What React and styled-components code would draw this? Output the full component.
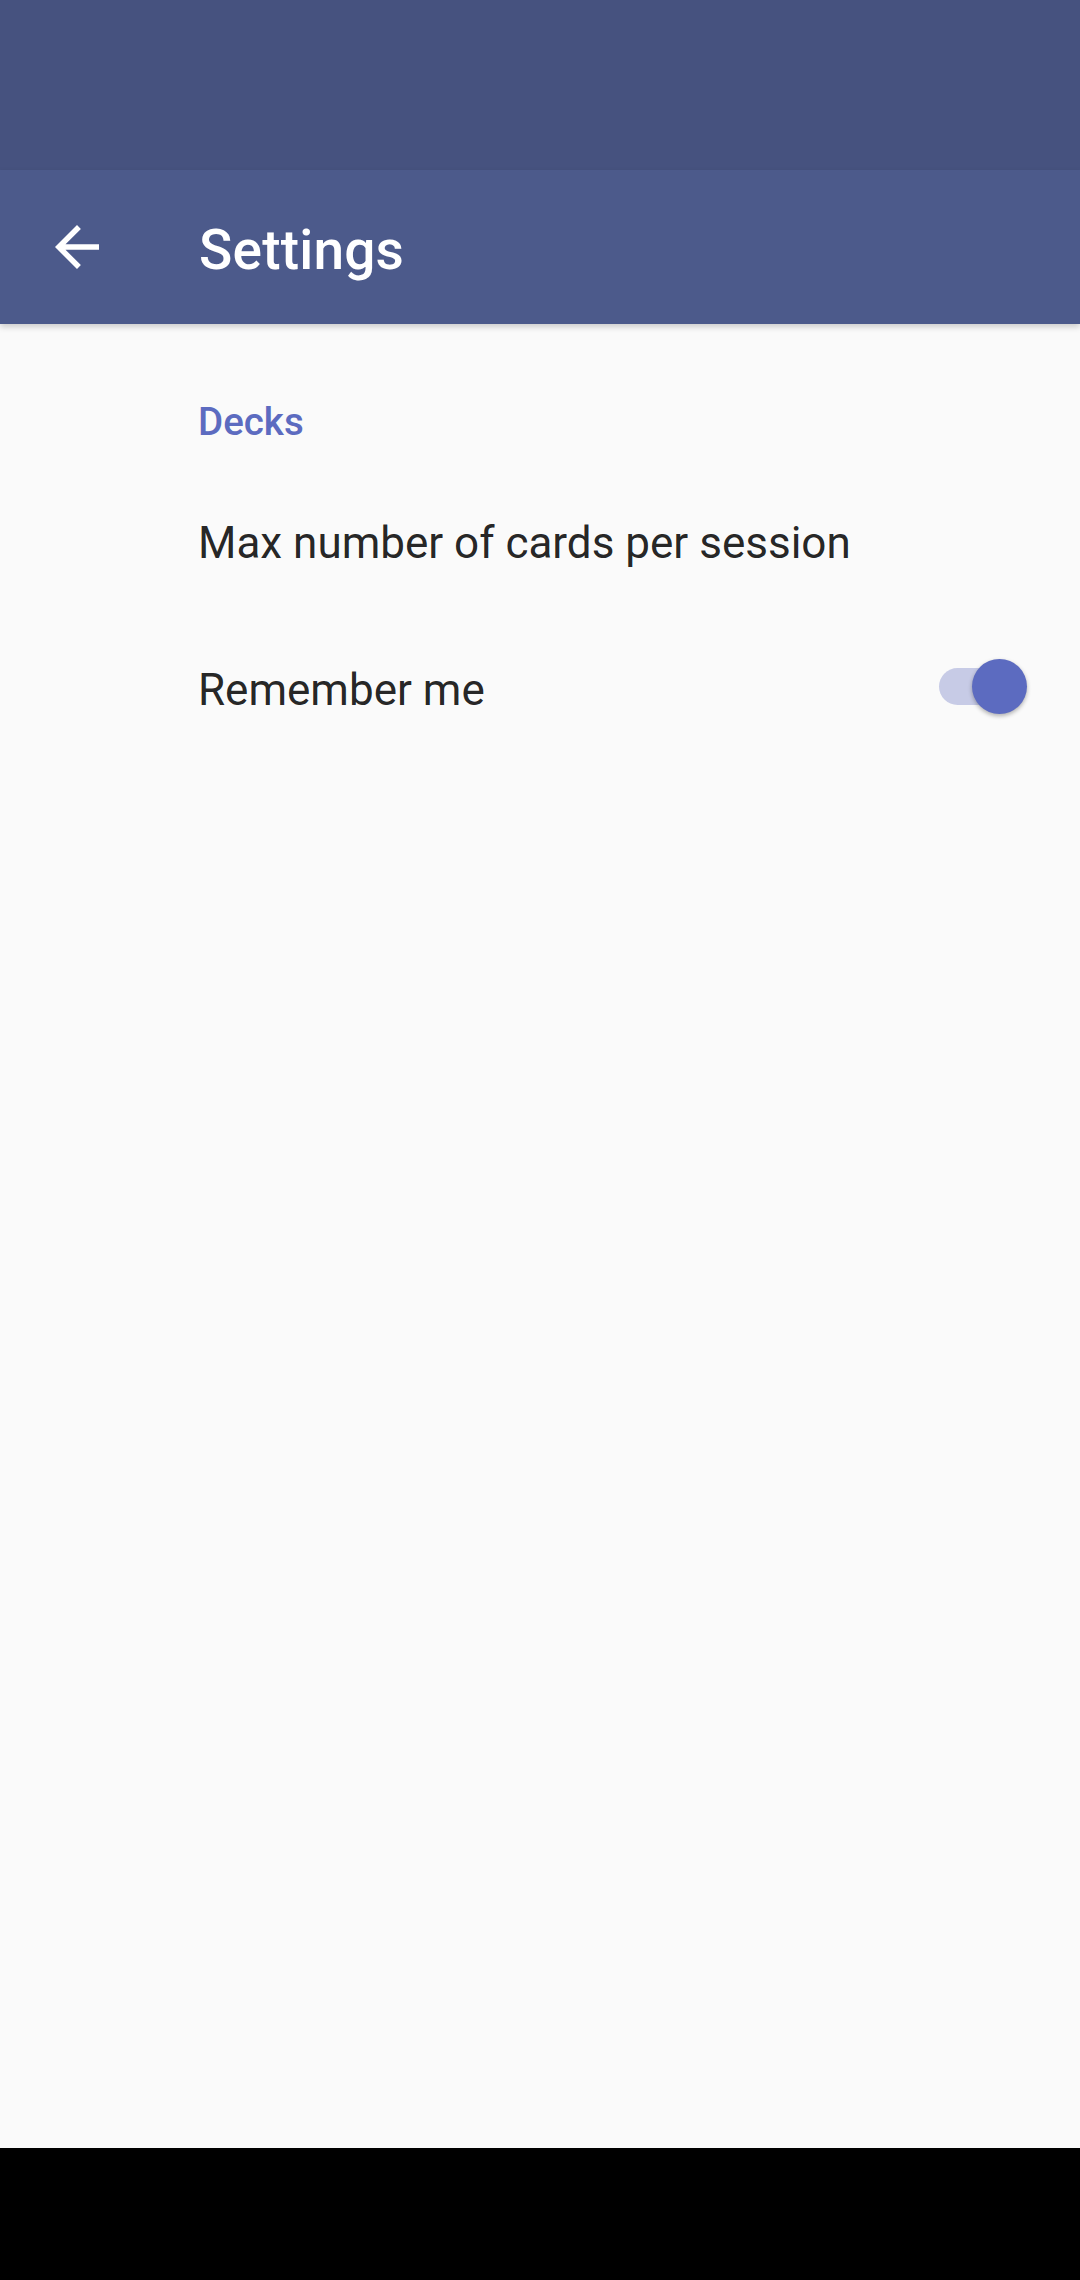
import styled, { createGlobalStyle } from 'styled-components'

const GlobalStyle = createGlobalStyle`
  html, body {
    margin: 0;
    padding: 0;
    background: #000;
  }
  body {
    font-family: Roboto, 'Noto Sans', sans-serif;
  }
`

const Screen = styled.div`
  width: 1080px;
  height: 2280px;
  display: flex;
  flex-direction: column;
  background: #fafafa;
  overflow: hidden;
`

const StatusBar = styled.div`
  height: 170px;
  flex-shrink: 0;
  background: #46527f;
`

const Toolbar = styled.div`
  position: relative;
  z-index: 1;
  height: 154px;
  flex-shrink: 0;
  display: flex;
  align-items: center;
  background: #4c5a8b;
  box-shadow: 0 3px 6px rgba(0, 0, 0, 0.18);
`

const NavButton = styled.div`
  width: 154px;
  height: 154px;
  display: flex;
  align-items: center;
  justify-content: center;
  color: #fff;
`

const Title = styled.h1`
  margin: 5px 0 0 45px;
  font-size: 55px;
  font-weight: 500;
  color: #fff;
  letter-spacing: 0.2px;
`

const Content = styled.div`
  flex: 1;
  display: flex;
  flex-direction: column;
  padding-left: 198px;
`

const CategoryTitle = styled.div`
  padding-top: 75px;
  line-height: 45px;
  font-size: 38.5px;
  font-weight: 500;
  color: #5c6bc0;
`

const PrefRow = styled.div`
  height: 147px;
  display: flex;
  align-items: center;
  justify-content: space-between;
  padding-right: 53px;
  box-sizing: border-box;
  margin-top: ${({ first }) => (first ? '26px' : '0')};
`

const PrefTitle = styled.div`
  font-size: 44px;
  line-height: 59px;
  color: rgba(0, 0, 0, 0.87);
`

const Switch = styled.div`
  position: relative;
  width: 88px;
  height: 55px;
  display: flex;
  align-items: center;
  margin-top: -8px;
`

const Track = styled.div`
  width: 84px;
  height: 37px;
  border-radius: 19px;
  background: ${({ on }) => (on ? '#c7cbe6' : '#bdbdbd')};
`

const Thumb = styled.div`
  position: absolute;
  top: 0;
  left: ${({ on }) => (on ? '33px' : '0')};
  width: 55px;
  height: 55px;
  border-radius: 50%;
  background: ${({ on }) => (on ? '#5c6bc0' : '#f1f1f1')};
  box-shadow: 0 2px 4px rgba(0, 0, 0, 0.3);
`

const NavigationBar = styled.div`
  height: 132px;
  flex-shrink: 0;
  background: #000;
`

function BackArrow() {
  return (
    <svg width="66" height="66" viewBox="0 0 24 24" fill="currentColor">
      <path d="M20 11H7.83l5.59-5.59L12 4l-8 8 8 8 1.41-1.41L7.83 13H20v-2z" />
    </svg>
  )
}

function Toggle({ on }) {
  return (
    <Switch>
      <Track on={on} />
      <Thumb on={on} />
    </Switch>
  )
}

export default function App() {
  return (
    <>
      <GlobalStyle />
      <Screen>
        <StatusBar />
        <Toolbar>
          <NavButton>
            <BackArrow />
          </NavButton>
          <Title>Settings</Title>
        </Toolbar>
        <Content>
          <CategoryTitle>Decks</CategoryTitle>
          <PrefRow first>
            <PrefTitle>Max number of cards per session</PrefTitle>
          </PrefRow>
          <PrefRow>
            <PrefTitle>Remember me</PrefTitle>
            <Toggle on />
          </PrefRow>
        </Content>
        <NavigationBar />
      </Screen>
    </>
  )
}
